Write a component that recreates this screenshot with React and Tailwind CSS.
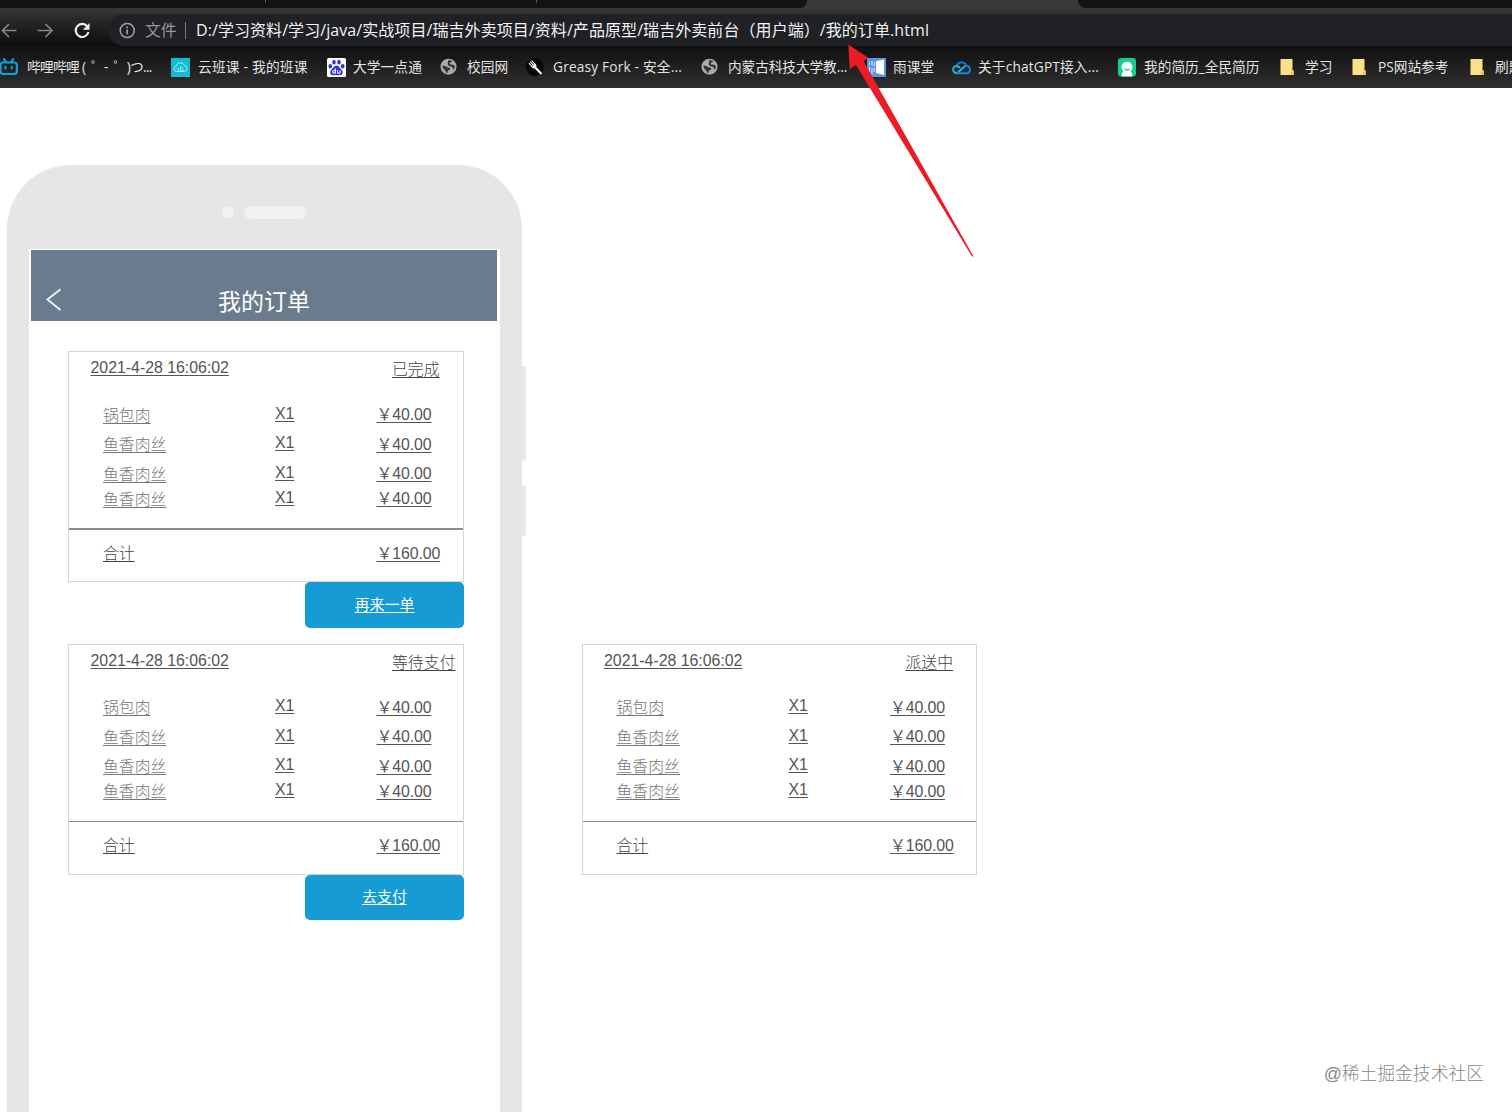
import React from "react";

const cjk = "font-['Open_Sans','Noto_Sans_CJK_SC',sans-serif]";
const link =
  "block whitespace-pre underline decoration-1 underline-offset-[2px] [text-decoration-skip-ink:none]";

function BiliIcon() {
  return (
    <svg width="18" height="18" viewBox="0 0 18 18" fill="none" stroke="#12a0dc" strokeWidth="2.2" strokeLinecap="round">
      <rect x="0.5" y="4.5" width="16.3" height="11.5" rx="2.5" />
      <path d="M4 1.2 6 3.8M13.2 1.2l-2 2.6M5.5 8.8v1.6M11.8 8.8v1.6" />
    </svg>
  );
}
function CloudClassIcon() {
  return (
    <svg width="19" height="19" viewBox="0 0 19 19" fill="none">
      <rect width="19" height="19" fill="#12bcd4" />
      <path d="M5.5 13.5a2.8 2.8 0 0 1-.3-5.5 4.3 4.3 0 0 1 8.3-.2 2.9 2.9 0 0 1 .2 5.7zM7 13V9.5M9.5 13V8.5l2.5 2.2V13" stroke="#a5f1f5" strokeWidth="1" />
    </svg>
  );
}
function PawIcon() {
  return (
    <svg width="19" height="19" viewBox="0 0 19 19">
      <rect width="19" height="19" rx="1.5" fill="#fff" />
      <g fill="#2c35d0">
        <ellipse cx="3.3" cy="8.2" rx="1.8" ry="2.3" />
        <ellipse cx="7" cy="4.2" rx="1.7" ry="2.4" />
        <ellipse cx="12" cy="4.2" rx="1.7" ry="2.4" />
        <ellipse cx="15.7" cy="8.2" rx="1.8" ry="2.3" />
        <path d="M9.5 7.6c2 0 2.9 2 4.6 3.6 3 2.8 1.500 6-1.200 6-1.500 0-2-.3-3.400-.3s-2 .3-3.500.3c-2.800 0-4.100-3.200-1.100-6 1.700-1.600 2.600-3.600 4.600-3.600z" />
      </g>
      <path d="M8.400 10.500v5M8.400 13.200a1.500 1.300 0 1 0 0 1.300M10.500 12.200v2q0 1.200 1.300 1.200t1.300-1.200v-2" fill="none" stroke="#fff" strokeWidth="1.1" />
    </svg>
  );
}
function GlobeIcon() {
  return (
    <svg width="18" height="18" viewBox="0 0 18 18">
      <circle cx="8.500" cy="8.700" r="8" fill="#a9abad" />
      <path d="M2.600 7.500c2 .2 3.400.8 4.400 1.600s2.200.2 3 1.200-.4 1.600-1.400 2-.8 2-1.600 3c-1.400-.4-1-2-2-3S2.300 10 2.600 7.500z" fill="#333" />
      <path d="M8 2.400c1.400-.3 3 .1 4.200.9-.6 1.300-2 .8-2.500 1.900s1.300 1.400 2.300 1.200 1.500 1 2.700 1c.3 1.700-.3 3.200-1.200 4.300-1-.6-.5-2.200-1.600-2.900s-3.400-.4-4-2.100.7-2.800.1-4.300z" fill="#333" />
    </svg>
  );
}
function ForkIcon() {
  return (
    <svg width="18" height="18" viewBox="0 0 18 18">
      <circle cx="9" cy="9" r="9" fill="#060606" />
      <path d="M8.500 8.800 14.800 15.300" stroke="#fff" strokeWidth="2.200" strokeLinecap="round" />
      <path d="M2.800 5 6.500 9.300Q8 10.500 9.300 9.300T9.400 6.700L5.600 2.500M4.200 3.700l4 4.400" fill="none" stroke="#fff" strokeWidth="1.100" />
      <path d="M6 8 8.300 5.900 10 8 8.500 9.800z" fill="#fff" />
    </svg>
  );
}
function RainIcon() {
  return (
    <svg width="19" height="19" viewBox="0 0 19 19">
      <rect width="19" height="19" fill="#5a95e6" />
      <path d="M9 3.200 17 1.500v15.500L9 15z" fill="#fff" />
      <path d="M2.500 4v3M2.500 9v5M5 3v5M5 10v6M7.300 4v4M7.300 10v4" stroke="#e4efff" strokeWidth="1" />
    </svg>
  );
}
function TencentCloudIcon() {
  return (
    <svg width="19" height="15" viewBox="0 0 19 15" fill="none" strokeWidth="2" strokeLinecap="round">
      <path d="M4.800 6.200A5 5 0 0 1 13.800 4.500" stroke="#087be8" />
      <path d="M4.800 5.900a3.700 3.700 0 1 0 .2 7.400L13 6.300" stroke="#22b9d4" />
      <path d="M5 13.300h9.300a3.700 3.700 0 1 0-1.200-7.200" stroke="#1386e8" />
      <path d="M4.800 6.200c1.300 0 2.200.6 3 1.400" stroke="#22b9d4" />
    </svg>
  );
}
function ResumeIcon() {
  return (
    <svg width="19" height="19" viewBox="0 0 19 19">
      <rect width="18" height="18.500" rx="3" fill="#12cf8c" />
      <path d="M9 3.800a5.300 5.300 0 0 1 3.300 9.500c1.600.8 2 2.500 2 5.200H3.700c0-2.700.4-4.400 2-5.200A5.300 5.300 0 0 1 9 3.800z" fill="#fff" />
      <path d="M6.300 10.800q2.700 2.400 5.400 0" fill="none" stroke="#12cf8c" strokeWidth="1.200" />
    </svg>
  );
}
function FolderIcon() {
  return (
    <svg width="15" height="18" viewBox="0 0 15 18">
      <path d="M.5 1h12v11.500h1.300V17H.5z" fill="#fbe08a" />
      <path d="M12.500 12.500h1.300V17h-3v-2.500z" fill="#eec24a" />
    </svg>
  );
}

const bookmarks = [
  { icon: BiliIcon, box: "w-[171px]", pad: "w-[27px]", text: "哔哩哔哩 (  ゜-  ゜)つ...", track: "tracking-[-0.67px]" },
  { icon: CloudClassIcon, box: "w-[156px]", pad: "w-[27px]", text: "云班课 - 我的班课", track: "tracking-[0.24px]" },
  { icon: PawIcon, box: "w-[113px]", pad: "w-[26px]", text: "大学一点通", track: "tracking-[0.1px]" },
  { icon: GlobeIcon, box: "w-[86px]", pad: "w-[27px]", text: "校园网", track: "" },
  { icon: ForkIcon, box: "w-[175px]", pad: "w-[27px]", text: "Greasy Fork - 安全...", track: "tracking-[0.18px]" },
  { icon: GlobeIcon, box: "w-[166px]", pad: "w-[27px]", text: "内蒙古科技大学教...", track: "tracking-[-0.1px]" },
  { icon: RainIcon, box: "w-[85px]", pad: "w-[26px]", text: "雨课堂", track: "" },
  { icon: TencentCloudIcon, box: "w-[166px]", pad: "w-[26px]", text: "关于chatGPT接入...", track: "tracking-[0.16px]" },
  { icon: ResumeIcon, box: "w-[162px]", pad: "w-[26px]", text: "我的简历_全民简历", track: "" },
  { icon: FolderIcon, box: "w-[72px]", pad: "w-[25px]", text: "学习", track: "" },
  { icon: FolderIcon, box: "w-[118px]", pad: "w-[26px]", text: "PS网站参考", track: "" },
  { icon: FolderIcon, box: "w-[72px]", pad: "w-[25px]", text: "刷题", track: "" },
];

function Browser() {
  return (
    <header className={"h-[88px] overflow-hidden bg-[#2c2c2c] " + cjk}>
      <div className="flex h-[9px] justify-between bg-[#3a3a3a]">
        <div className="flex w-[807px] justify-between rounded-br-[8px] border-b border-[#333] bg-[#131313] pr-[270px] pl-[265px]">
          <span className="h-[3px] w-px bg-[#555]" />
          <span className="h-[3px] w-px bg-[#555]" />
        </div>
        <div className="w-[434px] rounded-bl-[8px] border-b border-[#333] bg-[#131313]" />
      </div>
      <div className="flex h-[37px] items-start bg-linear-to-b from-[#363636] to-[#0c0c0c]">
        <svg className="mt-[11px] shrink-0" width="100" height="22" viewBox="0 0 100 22" fill="none" strokeWidth="1.7">
          <path d="M16.500 10.500H3M9 4 2.500 10.500 9 17" stroke="#858585" />
          <path d="M37.500 10.500H52M45.500 4 52 10.500 45.500 17" stroke="#858585" />
          <path d="M87.300 6.400A6.500 6.500 0 1 0 88.500 12" stroke="#f2f2f2" strokeWidth="2.100" />
          <path d="M89.500 3v6.700h-6.700z" fill="#f2f2f2" />
        </svg>
        <div className="mt-[5px] ml-[8px] flex h-[32px] grow items-center rounded-l-full bg-[#202124]">
          <svg className="ml-[11px] shrink-0" width="17" height="17" viewBox="0 0 17 17" fill="none" stroke="#a0a3a7">
            <circle cx="8.200" cy="8.500" r="7" strokeWidth="1.500" />
            <path d="M8.200 7.600v4.600M8.200 4.600v1.700" strokeWidth="1.600" />
          </svg>
          <span className="ml-[9px] w-[40px] text-[15.8px] leading-[20px] text-[#92959a]">文件</span>
          <span className="h-[17px] w-px bg-[#77797c]" />
          <span className="ml-[10px] text-[16px] leading-[20px] tracking-[0.07px] whitespace-pre text-[#f1f3f4]">
            D:/学习资料/学习/java/实战项目/瑞吉外卖项目/资料/产品原型/瑞吉外卖前台（用户端）/我的订单.html
          </span>
        </div>
      </div>
      <nav className="flex h-[42px] items-center bg-linear-to-b from-[#101010] to-[#303030]">
        {bookmarks.map(({ icon: Icon, box, pad, text, track }, i) => (
          <div key={i} className={"flex h-[20px] shrink-0 items-center " + box}>
            <span className={"shrink-0 " + pad}>
              <Icon />
            </span>
            <span className={"text-[13.700px] leading-[20px] whitespace-pre text-[#e4e4e4] " + track}>{text}</span>
          </div>
        ))}
      </nav>
    </header>
  );
}

const dishes = [
  { name: "锅包肉", row: "h-[29.500px]" },
  { name: "鱼香肉丝", row: "h-[29.500px]" },
  { name: "鱼香肉丝", row: "h-[25px]" },
  { name: "鱼香肉丝", row: "h-[25px]" },
];

function OrderCard({ status }) {
  return (
    <section className="h-[231px] w-[395.500px] border border-[#d5d5d5] text-[15.870px] leading-[18px] text-[#555]">
      <div className="flex h-[51.500px] pt-[7px] pl-[21.500px]">
        <span className={"w-[301.500px] " + link}>2021-4-28 16:06:02</span>
        <span className={"mt-[2px] h-[18px] font-light text-[#444] " + link}>{status}</span>
      </div>
      {dishes.map((d, i) => (
        <div key={i} className={"flex pl-[34px] " + d.row}>
          <div className="w-[172px] pt-[3px]">
            <span className={"w-fit font-light text-[#777] " + link}>{d.name}</span>
          </div>
          <div className="w-[101.500px] pt-px">
            <span className={"w-fit " + link}>X1</span>
          </div>
          <div className="pt-[2.500px]">
            <span className={"w-fit tracking-[-0.1px] " + link}>￥40.00</span>
          </div>
        </div>
      ))}
      <div className="mt-[15.500px] h-[1.500px] bg-[#8c8c8c]" />
      <div className="flex pt-[15px] pl-[34px]">
        <div className="w-[273.500px]">
          <span className={"w-fit font-light text-[#444] " + link}>合计</span>
        </div>
        <span className={"w-fit tracking-[-0.1px] " + link}>￥160.00</span>
      </div>
    </section>
  );
}

function OrderButton({ children }) {
  return (
    <button className="ml-auto flex h-[45.500px] w-[159px] items-center justify-center rounded-[5px] bg-[#169bd5] text-[14.900px] text-white">
      <span className={link}>{children}</span>
    </button>
  );
}

function Phone() {
  return (
    <div className="mt-[77px] ml-[7px] flex">
      <div className="h-[947px] w-[514.500px] rounded-t-[64px] bg-[#e6e6e6] px-[22px]">
        <div className="flex h-[84px] items-center justify-start gap-[10px] pt-[10px] pl-[193px]">
          <span className="size-[12px] rounded-full bg-[#f1f1f1]" />
          <span className="h-[13px] w-[63px] rounded-full bg-[#f1f1f1]" />
        </div>
        <div className="h-[863px] bg-white pt-px pl-[2px]">
          <div className="grid h-[71px] w-[466px] grid-cols-[1fr_auto_1fr] bg-[#697b8d] pt-[37px] text-white">
            <svg className="ml-[14px]" width="20" height="26" viewBox="0 0 20 26" fill="none">
              <path d="M15.500 2.200 2.500 12.500 15.500 23" stroke="#e8f2fb" strokeWidth="2" />
            </svg>
            <h1 className="pt-px text-[23px] leading-[28px]">我的订单</h1>
          </div>
          <div className="mt-[30px] ml-[37px] w-[396px]">
            <OrderCard status="已完成" />
            <OrderButton>再来一单</OrderButton>
            <div className="mt-[16px]">
              <OrderCard status="等待支付" />
              <OrderButton>去支付</OrderButton>
            </div>
          </div>
        </div>
      </div>
      <div className="w-[4.500px] pt-[201px]">
        <div className="h-[95px] rounded-r-[3px] bg-[#e9e9e9]" />
        <div className="mt-[24px] h-[51px] rounded-r-[3px] bg-[#e9e9e9]" />
      </div>
    </div>
  );
}

export default function App() {
  return (
    <div className="relative h-[1112px] w-[1512px] overflow-hidden bg-white font-['Liberation_Sans','Noto_Sans_CJK_SC',sans-serif]">
      <Browser />
      <main className="flex h-[1024px]">
        <Phone />
        <div className="mt-[555.500px] ml-[55.500px]">
          <OrderCard status="派送中" />
        </div>
      </main>
      <svg className="absolute top-[40px] left-[840px]" width="150" height="225" viewBox="0 0 150 225">
        <path d="M8.300 4.500 28.500 18 23.500 21 133.500 216.500 132 216.500 16 25 9.800 29z" fill="#ed1c24" />
      </svg>
      <span className="absolute right-[28px] bottom-[26px] text-[17.800px] leading-[24px] font-light whitespace-nowrap text-[#888]">
        @稀土掘金技术社区
      </span>
    </div>
  );
}
